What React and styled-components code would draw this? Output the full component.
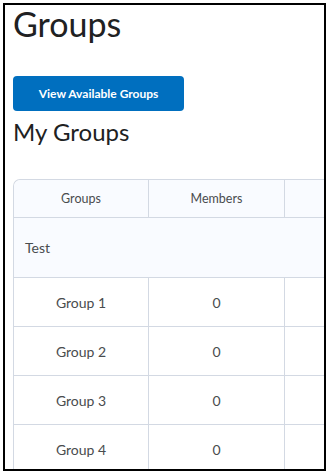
import React from 'react';
import styled, { createGlobalStyle } from 'styled-components';

const GlobalStyle = createGlobalStyle`
  html, body {
    margin: 0;
    padding: 0;
    background: #fff;
  }
  body {
    font-family: Lato, "Noto Sans", sans-serif;
  }
`;

const Frame = styled.div`
  box-sizing: border-box;
  margin: 3px;
  width: 323px;
  height: 468px;
  border: 2px solid #000;
  padding: 0 0 0 8px;
  overflow: hidden;
  background: #fff;
`;

const Title = styled.h1`
  margin: 0;
  font-size: 34px;
  line-height: 1.1;
  font-weight: 400;
  color: #202122;
`;

const PrimaryButton = styled.button`
  box-sizing: border-box;
  margin-top: 34px;
  width: 171px;
  height: 35px;
  border: 0;
  border-radius: 4px;
  background: #006fbf;
  color: #fff;
  font-family: Lato, sans-serif;
  font-size: 12px;
  font-weight: 700;
  cursor: pointer;
`;

const SubTitle = styled.h2`
  margin: 7px 0 0;
  font-size: 24px;
  line-height: 1.2;
  font-weight: 400;
  color: #202122;
`;

const Table = styled.table`
  margin-top: 32px;
  border-collapse: separate;
  border-spacing: 0;
  table-layout: fixed;
  width: 543px;
  border-top: 1px solid #d3d9e3;
  border-left: 1px solid #d3d9e3;
  border-top-left-radius: 7px;
  color: #494c4e;
`;

const HeadCell = styled.th`
  box-sizing: border-box;
  width: ${p => p.$width}px;
  height: 38px;
  padding: 0;
  background: #f9fbff;
  border-right: 1px solid #d3d9e3;
  border-bottom: 1px solid #d3d9e3;
  font-size: 12.5px;
  font-weight: 400;
  text-align: center;
  color: #494c4e;

  &:first-child {
    border-top-left-radius: 7px;
  }
`;

const SectionCell = styled.td`
  height: 59px;
  padding: 0 0 0 11px;
  background: #f9fbff;
  border-bottom: 1px solid #d3d9e3;
  font-size: 14px;
  text-align: left;
`;

const Cell = styled.td`
  height: 48px;
  padding: 0;
  border-right: 1px solid #d3d9e3;
  border-bottom: 1px solid #d3d9e3;
  font-size: 14px;
  text-align: center;
`;

const groups = [
  { name: 'Group 1', members: 0 },
  { name: 'Group 2', members: 0 },
  { name: 'Group 3', members: 0 },
  { name: 'Group 4', members: 0 },
];

export default function App() {
  return (
    <>
      <GlobalStyle />
      <Frame>
        <Title>Groups</Title>
        <PrimaryButton>View Available Groups</PrimaryButton>
        <SubTitle>My Groups</SubTitle>
        <Table>
          <thead>
            <tr>
              <HeadCell $width={135}>Groups</HeadCell>
              <HeadCell $width={136}>Members</HeadCell>
              <HeadCell $width={136} />
              <HeadCell $width={136} />
            </tr>
          </thead>
          <tbody>
            <tr>
              <SectionCell colSpan={4}>Test</SectionCell>
            </tr>
            {groups.map(g => (
              <tr key={g.name}>
                <Cell>{g.name}</Cell>
                <Cell>{g.members}</Cell>
                <Cell />
                <Cell />
              </tr>
            ))}
          </tbody>
        </Table>
      </Frame>
    </>
  );
}
